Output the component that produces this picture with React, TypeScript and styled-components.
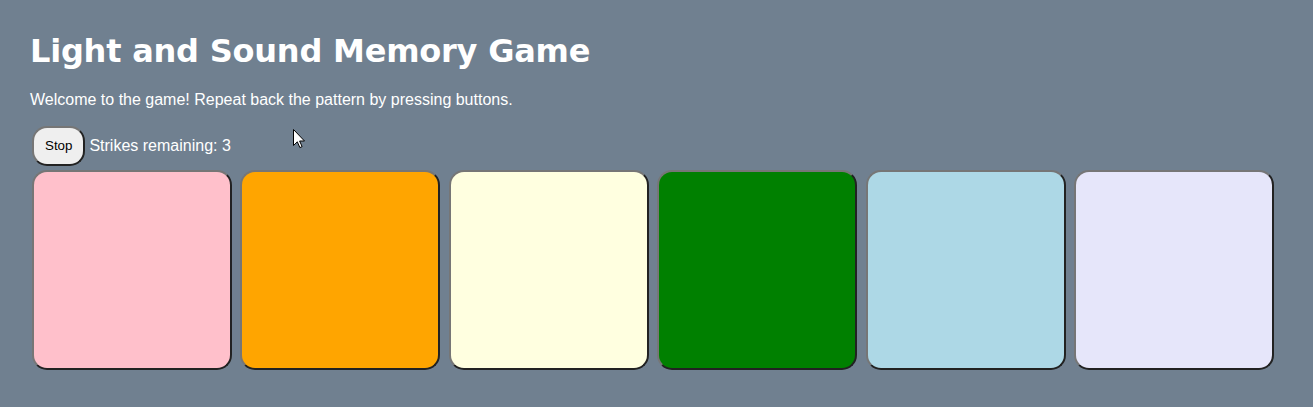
import React from "react";
import styled, { createGlobalStyle } from "styled-components";

const GlobalStyle = createGlobalStyle`
  html, body {
    margin: 0;
    padding: 0;
    background: #708090;
  }
  body {
    font-family: "Liberation Sans", Arial, sans-serif;
  }
`;

const Page = styled.main`
  position: relative;
  padding: 30px 30px 0 30px;
  min-height: 407px;
  box-sizing: border-box;
  display: flex;
  flex-direction: column;
  align-items: flex-start;
`;

const Title = styled.h1`
  margin: 2px 0 20px 0;
  font-family: "DejaVu Sans", Verdana, sans-serif;
  font-weight: bold;
  font-size: 32px;
  line-height: 39px;
  letter-spacing: -0.22px;
  color: #ffffff;
`;

const Intro = styled.p`
  margin: 0 0 15px 0;
  font-size: 16px;
  line-height: 18px;
  color: #ffffff;
`;

const Controls = styled.div`
  display: flex;
  align-items: center;
  gap: 2px;
`;

const ControlButton = styled.button`
  margin: 2px;
  padding: 10px 11px;
  font-family: "Liberation Sans", Arial, sans-serif;
  font-size: 13.33px;
  line-height: 16px;
  color: #000000;
  background: #efefef;
  border: 2px solid;
  border-color: #767676 #222222 #222222 #767676;
  border-radius: 15px;
  cursor: pointer;
`;

const Strikes = styled.span`
  font-size: 16px;
  color: #ffffff;
`;

const Board = styled.div`
  display: flex;
  gap: 4.4px;
`;

const GameButton = styled.button<{ $color: string }>`
  width: 200px;
  height: 200px;
  margin: 2px;
  padding: 0;
  box-sizing: border-box;
  background: ${(p) => p.$color};
  border: 2px solid;
  border-color: #767676 #222222 #222222 #767676;
  border-radius: 15px;
  cursor: pointer;
`;

const Pointer = styled.svg`
  position: absolute;
  left: 293px;
  top: 129px;
  pointer-events: none;
`;

const colors = ["#ffc0cb", "#ffa500", "#ffffe0", "#008000", "#add8e6", "#e6e6fa"];

export default function App() {
  return (
    <>
      <GlobalStyle />
      <Page>
        <Title>Light and Sound Memory Game</Title>
        <Intro>Welcome to the game! Repeat back the pattern by pressing buttons.</Intro>
        <Controls>
          <ControlButton>Stop</ControlButton>
          <Strikes>Strikes remaining: 3</Strikes>
        </Controls>
        <Board>
          {colors.map((c, i) => (
            <GameButton key={i} $color={c} aria-label={`button ${i + 1}`} />
          ))}
        </Board>
        <Pointer width="13" height="20" viewBox="0 0 13 20">
          <path
            d="M0.5 0.5 L0.5 16.5 L4.3 12.8 L6.9 18.6 L9.1 17.6 L6.6 12 L11.5 12 Z"
            fill="#ffffff"
            stroke="#000000"
            strokeWidth="1"
            strokeLinejoin="miter"
          />
        </Pointer>
      </Page>
    </>
  );
}
